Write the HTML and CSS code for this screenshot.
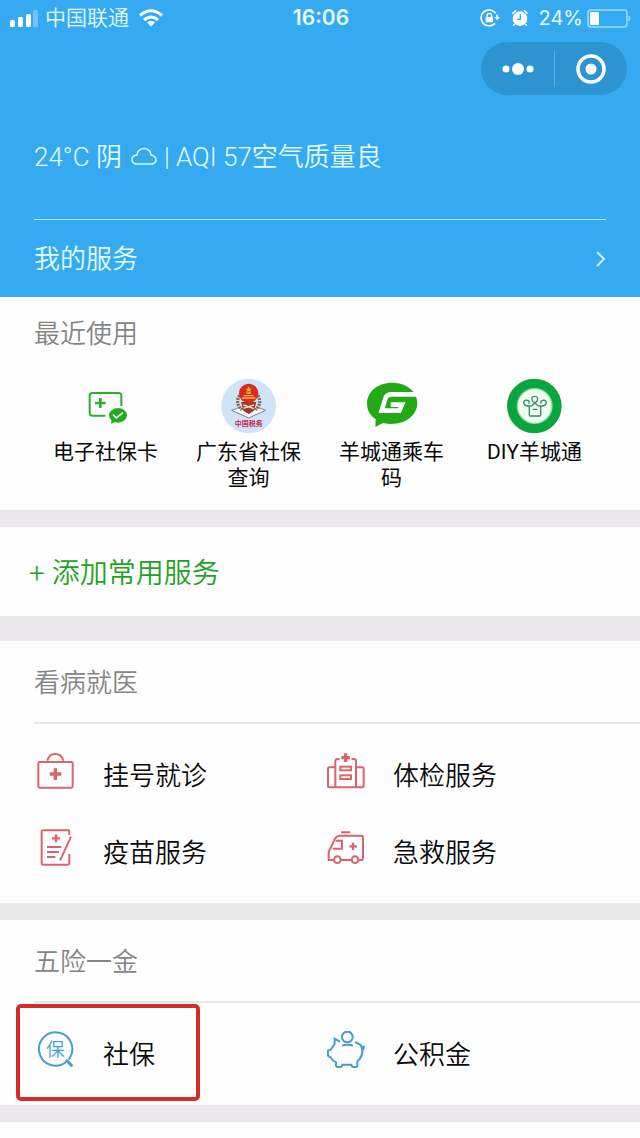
FILE: index.html
```html
<!DOCTYPE html>
<html lang="zh-CN">
<head>
<meta charset="utf-8">
<meta name="viewport" content="width=device-width, initial-scale=1">
<title>城市服务</title>
<link rel="stylesheet" href="styles.css">
</head>
<body>
<header class="hero">
  <div class="status">
    <div class="status-side">
      <svg class="signal" width="28" height="18" viewBox="0 0 28 18" aria-hidden="true">
        <g fill="#fff"><rect y="11" width="5" height="7" rx="1.5"/><rect x="8" y="8" width="5" height="10" rx="1.5"/><rect x="16" y="5" width="5" height="13" rx="1.5"/><rect x="23" y="1" width="5" height="17" rx="1.5" opacity=".3"/></g>
      </svg>
      <span class="carrier">中国联通</span>
      <svg class="wifi" width="24" height="18" viewBox="0 0 24 18" aria-hidden="true">
        <g fill="none" stroke="#fff" stroke-width="3"><path d="M1 6.500Q12-3 23 6.500"/><path d="M5 11Q12 5 19 11"/></g><path d="M8 13.500Q12 10 16 13.500L12 17.500Z" fill="#fff"/>
      </svg>
    </div>
    <time class="clock">16:06</time>
    <div class="status-side status-right">
      <svg width="20" height="18" viewBox="0 0 60 54" aria-hidden="true">
        <path d="M47 13A24 24 0 1 0 45 43M50 17Q52 22 52 26" fill="none" stroke="#fff" stroke-width="5"/>
        <path d="M43 24H60L51 34Z" fill="#fff"/><rect x="17" y="24" width="22" height="16" rx="2" fill="#fff"/><path d="M21 25V20a7 7 0 0 1 14 0V25" fill="none" stroke="#fff" stroke-width="4"/>
      </svg>
      <svg class="alarm" width="18" height="18" viewBox="0 0 54 54" aria-hidden="true">
        <circle cx="27" cy="29" r="22" fill="#fff"/><path d="M4 14L15 4M50 14L39 4M11 45L7 50M43 45L47 50" stroke="#fff" stroke-width="5"/><path d="M28 15V31H18" fill="none" stroke="#36aaf0" stroke-width="4"/>
      </svg>
      <span class="percent">24%</span>
      <svg class="battery" width="45" height="19" viewBox="0 0 45 19" aria-hidden="true">
        <rect x="1" y="1" width="39" height="17" rx="3" fill="none" stroke="#9fe0ff" stroke-width="1.500"/><rect x="3" y="3" width="9" height="13" rx="1" fill="#fff"/><path d="M42 7Q44 9.500 42 12Z" fill="#9fe0ff" stroke="#9fe0ff"/>
      </svg>
    </div>
  </div>
  <div class="capsule">
    <button type="button" aria-label="更多">
      <svg width="34" height="14" viewBox="0 0 34 14"><g fill="#fff"><circle cx="5" cy="7" r="3.500"/><circle cx="17" cy="7" r="6"/><circle cx="29" cy="7" r="3.500"/></g></svg>
    </button>
    <button type="button" aria-label="关闭">
      <svg width="30" height="30" viewBox="0 0 30 30"><circle cx="15" cy="15" r="13" fill="none" stroke="#fff" stroke-width="3.500"/><circle cx="15" cy="15" r="5.500" fill="#fff"/></svg>
    </button>
  </div>
  <p class="weather">
    <span>24°C 阴</span>
    <svg width="26" height="20" viewBox="0 0 26 20" aria-hidden="true"><path d="M5 17Q1 16 1 12.500Q1 8.500 6 8Q7 1.500 13 1.500Q19 1.500 20 8Q25 9 25 13Q25 16 21 17Z" fill="none" stroke="#d8fbff" stroke-width="1.500"/></svg>
    <span>| AQI 57空气质量良</span>
  </p>
  <a class="mine" href="#mine">
    <span>我的服务</span>
    <svg width="11" height="16" viewBox="0 0 11 16" aria-hidden="true"><path d="M2 1L9 8L2 15" fill="none" stroke="#c8f2ff" stroke-width="2"/></svg>
  </a>
</header>
<main>
  <section class="card">
    <h2 class="title title-recent">最近使用</h2>
    <div class="recent">
      <a href="#card">
        <svg width="56" height="56" viewBox="144 26 168 168" aria-hidden="true">
          <path d="M226 139H187Q179 139 179 131V79Q179 71 187 71H266Q274 71 274 79V110" fill="none" stroke="#2cae30" stroke-width="6"/>
          <path d="M195 101H227M211 86V116" stroke="#2cae30" stroke-width="8"/>
          <ellipse cx="264" cy="138" rx="27" ry="22" fill="#22aa25"/><path d="M245 151L243 163L258 157Z" fill="#22aa25"/>
          <path d="M249 136L259 146L279 130" fill="none" stroke="#d8ffd8" stroke-width="5"/>
        </svg>
        <span>电子社保卡</span>
      </a>
      <a href="#query">
        <svg width="56" height="56" viewBox="572 24 168 168" aria-hidden="true">
          <circle cx="655" cy="108" r="82" fill="#cfe4f7"/>
          <path d="M604 121L628 112L655 130L682 112L706 121L655 144Z" fill="#f5f7f8" stroke="#79858f" stroke-width="3"/>
          <path d="M628 76Q613 101 635 119M682 76Q697 101 675 119" fill="none" stroke="#846750" stroke-width="10" stroke-dasharray="6 3"/>
          <path d="M632 96H678L671 122L655 132L639 122Z" fill="#9b3b2e"/>
          <path d="M639 115L671 105M639 105L671 116" stroke="#f1dfb6" stroke-width="4"/>
          <circle cx="655" cy="70" r="29" fill="#d92c20"/>
          <path d="M635 84H675M640 77H670M648 69H662" stroke="#f0b443" stroke-width="4"/>
          <path d="M655 49L658 56L665 56L659 60L662 67L655 63L648 67L651 60L645 56L652 56Z" fill="#f6c143"/>
          <text x="655" y="167" text-anchor="middle" class="seal">中国税务</text>
        </svg>
        <span>广东省社保查询</span>
      </a>
      <a href="#ride">
        <svg width="56" height="56" viewBox="131 24 168 168" aria-hidden="true">
          <path d="M215 38C173 38 140 64 140 101C140 120 149 136 166 147L165 171L188 159C239 171 291 144 291 99C291 63 257 38 215 38Z" fill="#22aa16"/>
          <path d="M292 73H214Q200 73 196 83L184 122H237L245 104H211" fill="none" stroke="#fff" stroke-width="14"/>
        </svg>
        <span>羊城通乘车码</span>
      </a>
      <a href="#diy">
        <svg width="56" height="56" viewBox="560 24 168 168" aria-hidden="true">
          <circle cx="642" cy="108" r="82" fill="#0ba540"/><circle cx="643" cy="108" r="54" fill="#8fd9a0"/><circle cx="643" cy="108" r="50" fill="#effff0"/>
          <path d="M627 137V108Q611 109 610 98Q612 88 622 91Q630 94 625 101M661 137V108Q677 109 678 98Q676 88 666 91Q658 94 663 101M627 138H661M627 108Q636 109 637 104L650 94Q656 79 643 79Q630 79 637 94L650 104Q651 109 661 108M637 118H651" fill="none" stroke="#3c8869" stroke-width="4"/>
        </svg>
        <span>DIY羊城通</span>
      </a>
    </div>
  </section>
  <section class="card">
    <button class="add" type="button">+ 添加常用服务</button>
  </section>
  <section class="card">
    <h2 class="title">看病就医</h2>
    <div class="services medical">
      <a href="#register">
        <svg width="40" height="40" viewBox="51 65 120 120" aria-hidden="true">
          <rect x="55" y="95" width="103" height="77" rx="4"/><path d="M82 91Q87 71 106 71Q125 71 130 91"/><path class="cross" d="M89 131H124M106 114V149"/>
        </svg>
        <span>挂号就诊</span>
      </a>
      <a href="#checkup">
        <svg width="40" height="40" viewBox="51 65 120 120" aria-hidden="true">
          <path d="M76 171H57Q54 171 54 167V115Q54 111 58 111H76M138 111H157Q161 111 161 115V167Q161 171 157 171H76V92Q76 86 82 86H89M125 86H132Q138 86 138 92V171"/><rect x="91" y="109" width="32" height="11"/><rect x="91" y="135" width="32" height="11"/><path class="cross" d="M94 82H120M107 69V95"/>
        </svg>
        <span>体检服务</span>
      </a>
      <a href="#vaccine">
        <svg width="40" height="40" viewBox="51 295 120 120" aria-hidden="true">
          <path d="M148 313V303Q148 299 144 299H69Q65 299 65 303V398Q65 402 69 402H144Q148 402 148 398V370"/><path d="M81 349H124M81 364H117M81 379H106M153 318L127 375L120 389"/><path class="cross cross-small" d="M96 323H120M108 311V335"/>
        </svg>
        <span>疫苗服务</span>
      </a>
      <a href="#emergency">
        <svg width="40" height="40" viewBox="51 295 120 120" aria-hidden="true">
          <path d="M71 388H56V364L75 324Q80 315 90 315H153Q159 315 159 321V383Q159 388 154 388H146M123 388H93M93 305H121M68 354H96V330H77"/><circle cx="82" cy="387" r="10"/><circle cx="135" cy="387" r="10"/><path class="cross cross-small" d="M118 347H141M129 336V358"/>
        </svg>
        <span>急救服务</span>
      </a>
    </div>
  </section>
  <section class="card">
    <h2 class="title">五险一金</h2>
    <div class="services insurance">
      <a class="marked" href="#social">
        <svg width="40" height="40" viewBox="111 118 120 120" aria-hidden="true">
          <path d="M198 211A50 50 0 1 1 206 203"/><path d="M198 204L217 224" stroke-width="9"/><text x="166" y="194" text-anchor="middle">保</text>
        </svg>
        <span>社保</span>
      </a>
      <a href="#fund">
        <svg width="40" height="40" viewBox="51 118 120 120" aria-hidden="true">
          <circle cx="112" cy="136" r="16"/><path d="M96 162Q112 156 129 162M90 150L74 141V157L62 174L54 177V192L62 197Q67 207 78 212V221Q78 226 83 226H91Q96 226 97 219H124Q125 226 130 226H138Q142 226 142 221V209Q156 197 157 179Q157 164 149 158L135 151M154 178Q163 173 161 162"/>
        </svg>
        <span>公积金</span>
      </a>
    </div>
  </section>
  <section class="card card-next"></section>
</main>
</body>
</html>
```
FILE: styles.css
```css
*,
*::after {
  box-sizing: border-box;
}

body {
  margin: 0;
  min-height: 100vh;
  display: flex;
  flex-direction: column;
  background: #eae8eb;
  color: #0a0a0a;
  font-family: Roboto, "Noto Sans CJK SC", sans-serif;
  font-size: 26px;
  font-weight: 350;
  line-height: 36px;
}

a {
  color: inherit;
  text-decoration: none;
}

button {
  border: 0;
  background: none;
  padding: 0;
  font: inherit;
  cursor: pointer;
}

svg {
  display: block;
  flex: none;
}

.hero {
  display: flex;
  flex-direction: column;
  background: #36aaf0;
  color: #e2fcff;
}

.status {
  display: grid;
  grid-template-columns: 1fr auto 1fr;
  align-items: center;
  height: 36px;
  padding: 0 8px 0 10px;
}

.status-side {
  display: flex;
  align-items: center;
  font-size: 21px;
}

.status-right {
  justify-content: flex-end;
}

.carrier {
  margin: 0 10px 0 7px;
}

.clock {
  font-family: Inter, sans-serif;
  font-size: 21px;
  font-weight: 600;
}

.alarm {
  margin-left: 11px;
}

.percent {
  margin: 0 4px 0 10px;
  font-family: Inter, sans-serif;
  font-size: 20px;
  font-weight: 400;
}

.capsule {
  display: grid;
  grid-template-columns: 1fr 1fr;
  align-self: flex-end;
  align-items: center;
  width: 146px;
  height: 53px;
  margin: 6px 13px 0 0;
  border-radius: 27px;
  background: #2c94d0;
}

.capsule button {
  display: grid;
  place-items: center;
  height: 36px;
}

.capsule button + button {
  border-left: 1px solid #59b1e2;
}

.weather {
  display: flex;
  align-items: center;
  gap: 9px;
  margin: 44px 34px;
}

.weather svg {
  margin-right: -2px;
}

.mine {
  display: flex;
  align-items: center;
  justify-content: space-between;
  height: 78px;
  margin: 0 34px;
  border-top: 1px solid #b2e8fb;
}

.card {
  margin-bottom: 17px;
  background: #fefefe;
}

main {
  display: flex;
  flex: 1;
  flex-direction: column;
}

.card:has(.add) {
  margin-bottom: 25px;
}

.card-next {
  flex: 1;
  margin-bottom: 0;
}

.title {
  margin: 0 0 0 34px;
  padding-top: 3px;
  border-bottom: 2px solid #e6e5e7;
  color: #858585;
  font-size: 26px;
  font-weight: 350;
  line-height: 78px;
}

.title-recent {
  border: 0;
  line-height: 68px;
}

.recent {
  display: grid;
  grid-template-columns: repeat(4, 1fr);
  padding: 10px 34px 19px;
  font-size: 21px;
  font-weight: 400;
  line-height: 26px;
  text-align: center;
}

.recent a {
  display: flex;
  flex-direction: column;
  align-items: center;
  gap: 5px;
  padding: 0 18px;
}

.seal {
  fill: #c8284d;
  font-size: 21px;
  font-weight: 700;
}

.add {
  display: block;
  width: 100%;
  padding: 27px 29px 22px;
  color: #1fa324;
  font-size: 28px;
  line-height: 40px;
  text-align: left;
}

.services {
  display: grid;
  grid-template-columns: 1fr 1fr;
  padding: 13px 26px 12px 34px;
}

.services a {
  position: relative;
  display: flex;
  align-items: center;
  gap: 26px;
  height: 77px;
  padding-left: 3px;
}

.services svg {
  margin-bottom: 8px;
  fill: none;
  stroke-width: 6;
}

.medical svg {
  stroke: #d9646e;
}

.medical .cross {
  stroke-width: 10;
}

.medical .cross-small {
  stroke-width: 7;
}

.insurance svg {
  stroke: #459fd0;
}

.insurance text {
  fill: #459fd0;
  stroke: none;
  font-size: 56px;
}

.marked::after {
  content: "";
  position: absolute;
  top: -12px;
  left: -18px;
  width: 184px;
  height: 97px;
  border: 4px solid #d72b27;
  border-radius: 5px;
}
```
